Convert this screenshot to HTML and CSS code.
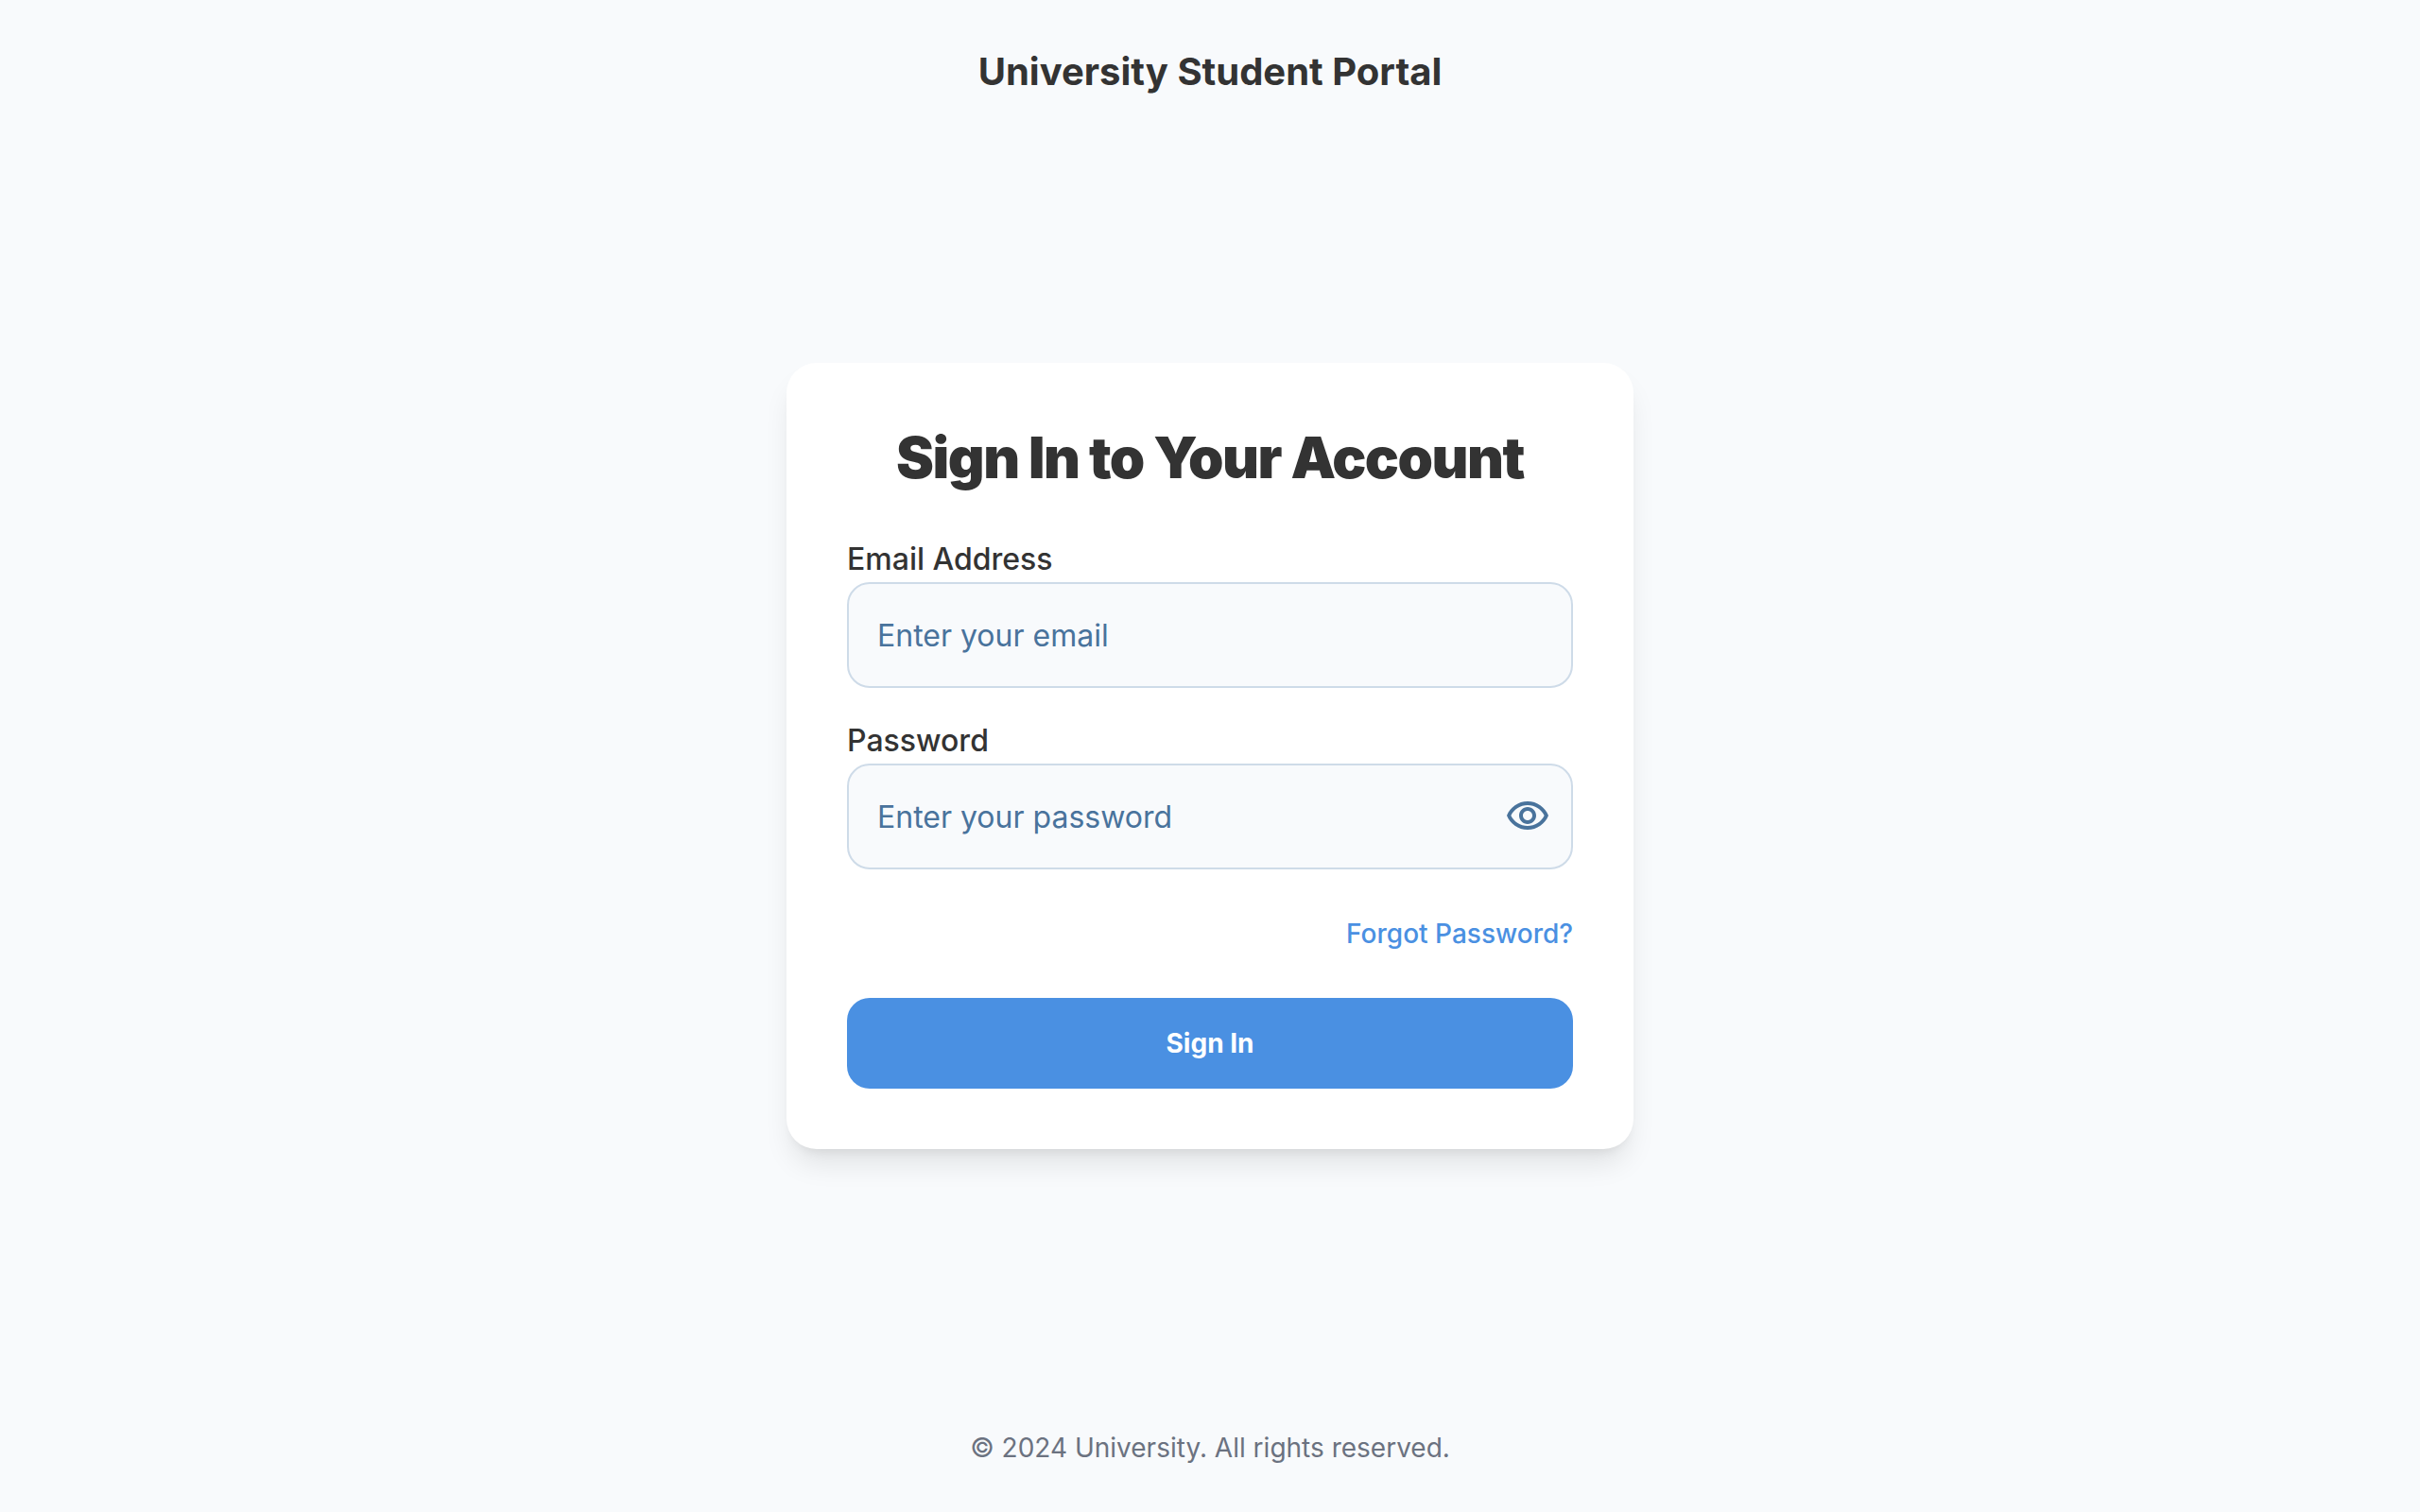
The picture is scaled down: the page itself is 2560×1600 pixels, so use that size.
FILE: index.html
```html
<!DOCTYPE html>
<html lang="en">
<head>
  <meta charset="utf-8">
  <meta name="viewport" content="width=device-width, initial-scale=1">
  <title>University Student Portal</title>
  <link rel="stylesheet" href="styles.css">
</head>
<body>
  <div class="page">
    <header class="page-header">
      <h2 class="brand">University Student Portal</h2>
    </header>
    <main class="card">
      <h1 class="card-title">Sign In to Your Account</h1>
      <form class="form">
        <div class="fields">
          <div class="field">
            <label class="label" for="email">Email Address</label>
            <input class="input" id="email" name="email" type="email" placeholder="Enter your email">
          </div>
          <div class="field">
            <label class="label" for="password">Password</label>
            <div class="password">
              <input class="input input-with-toggle" id="password" name="password" type="password" placeholder="Enter your password">
              <button class="toggle" type="button" aria-label="Show password">
                <svg class="icon" viewBox="0 0 24 24" aria-hidden="true"><path fill="currentColor" d="M12 6c3.79 0 7.17 2.13 8.82 5.5C19.17 14.87 15.79 17 12 17s-7.17-2.13-8.82-5.5C4.83 8.13 8.21 6 12 6m0-2C7 4 2.73 7.11 1 11.5 2.73 15.89 7 19 12 19s9.27-3.11 11-7.5C21.27 7.11 17 4 12 4zm0 5c1.38 0 2.5 1.12 2.5 2.5S13.38 14 12 14s-2.5-1.12-2.5-2.5S10.62 9 12 9m0-2c-2.48 0-4.5 2.02-4.5 4.5S9.52 16 12 16s4.5-2.02 4.5-4.5S14.48 7 12 7z"/></svg>
              </button>
            </div>
          </div>
        </div>
        <a class="forgot" href="#">Forgot Password?</a>
        <button class="submit" type="submit">Sign In</button>
      </form>
    </main>
    <footer class="page-footer">
      <p class="copyright">© 2024 University. All rights reserved.</p>
    </footer>
  </div>
</body>
</html>
```
FILE: styles.css
```css
*,
*::before,
*::after {
  box-sizing: border-box;
}

body {
  margin: 0;
  background: #f8fafc;
  color: #333333;
  font-family: Inter, "Liberation Sans", sans-serif;
  font-size: 32px;
  line-height: 48px;
}

h1,
h2,
p {
  margin: 0;
}

button,
input {
  font: inherit;
}

.page {
  display: grid;
  grid-template-rows: 1fr auto 1fr;
  justify-items: center;
  min-height: 100vh;
}

.page-header,
.page-footer {
  padding: 48px;
  text-align: center;
}

.page-footer {
  align-self: end;
}

.brand {
  font-size: 40px;
  line-height: 56px;
  font-weight: 700;
}

.copyright {
  color: #6b7280;
  font-size: 28px;
  line-height: 40px;
}

.card {
  width: 100%;
  max-width: 896px;
  padding: 64px;
  border-radius: 32px;
  background: #ffffff;
  box-shadow: 0 20px 30px -6px rgba(0, 0, 0, 0.1), 0 8px 12px -8px rgba(0, 0, 0, 0.1);
}

.card-title {
  margin-bottom: 48px;
  font-size: 60px;
  line-height: 72px;
  font-weight: 900;
  letter-spacing: -0.025em;
  text-align: center;
}

.form {
  display: flex;
  flex-direction: column;
  gap: 48px;
}

.fields {
  display: flex;
  flex-direction: column;
  gap: 32px;
}

.field {
  display: flex;
  flex-direction: column;
}

.label {
  font-weight: 500;
}

.input {
  width: 100%;
  height: 112px;
  padding: 0 30px;
  border: 2px solid #cedbe8;
  border-radius: 24px;
  background: #f8fafc;
  color: #333333;
}

.input::placeholder {
  color: #49739c;
  opacity: 1;
}

.input-with-toggle {
  padding-right: 96px;
}

.password {
  position: relative;
}

.toggle {
  position: absolute;
  top: 0;
  right: 0;
  bottom: 0;
  display: flex;
  align-items: center;
  padding: 0 24px;
  border: 0;
  background: none;
  color: #49739c;
  cursor: pointer;
}

.icon {
  display: block;
  width: 48px;
  height: 48px;
}

.forgot {
  align-self: flex-end;
  color: #4a90e2;
  font-size: 28px;
  line-height: 40px;
  font-weight: 500;
  text-decoration: none;
}

.submit {
  height: 96px;
  padding: 0 32px;
  border: 0;
  border-radius: 24px;
  background: #4a90e2;
  color: #ffffff;
  font-size: 28px;
  line-height: 40px;
  font-weight: 700;
  cursor: pointer;
}
```
